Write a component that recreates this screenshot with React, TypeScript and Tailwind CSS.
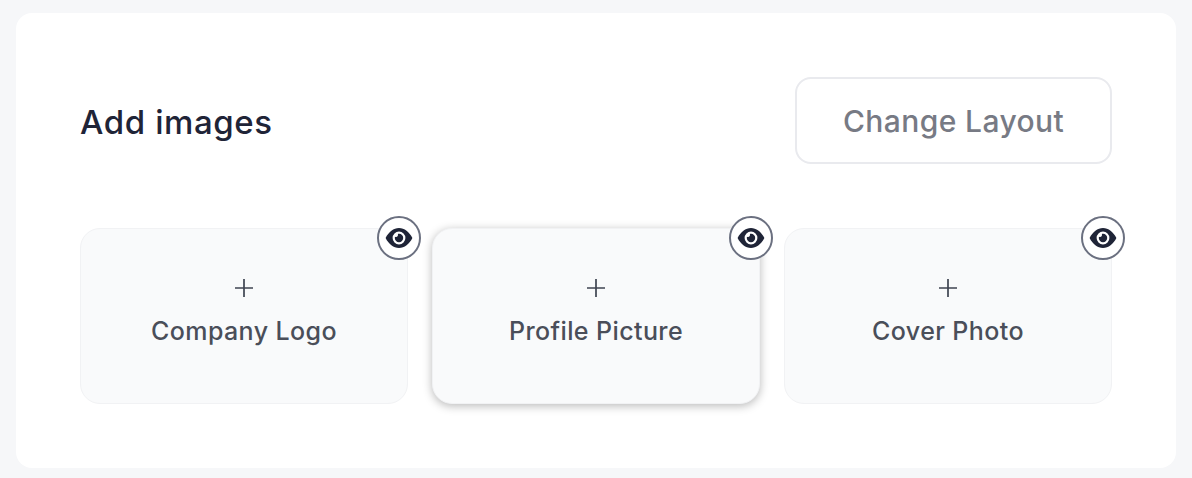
const slots = [
  { label: 'Company Logo', raised: false },
  { label: 'Profile Picture', raised: true },
  { label: 'Cover Photo', raised: false },
];

const EyeBadge = () => (
  <div className="absolute top-[-13px] right-[-14px] w-[44px] h-[44px] rounded-full bg-white border-2 border-[#6b7080] flex items-center justify-center">
    <svg width="28" height="28" viewBox="0 0 28 28">
      <path
        fillRule="evenodd"
        fill="#1f2437"
        d="M14 4C8.600 4 3.600 8 .6 14c3 6 8 10 13.400 10s10.400-4 13.400-10C24.400 8 19.400 4 14 4zM14 7.600a6.400 6.400 0 1 1 0 12.800a6.400 6.400 0 0 1 0-12.800z"
      />
      <path fill="#1f2437" d="M14 9.800a4.200 4.200 0 1 1-4.200 4.200c0-.4.100-.9.200-1.300a2.200 2.200 0 0 0 3-1.500c.1-.5 0-1-.2-1.300c.4-.1.800-.1 1.200-.1z" />
    </svg>
  </div>
);

const ImageSlot = ({ label, raised }: { label: string; raised: boolean }) => (
  <div
    className={`relative h-[176px] rounded-[20px] bg-[#f9fafb] border border-[#f1f2f4] flex flex-col items-center pt-[49px] ${
      raised ? 'shadow-[0_2px_10px_rgba(0,0,0,0.28)]' : ''
    }`}
  >
    <EyeBadge />
    <svg width="20" height="20" viewBox="0 0 20 20" fill="none" stroke="#3f4451" strokeWidth="1.700">
      <path d="M10 1v18M1 10h18" />
    </svg>
    <span className="mt-[17px] text-[25px] leading-[32px] font-medium tracking-[0.4px] text-[#4a4e59]">{label}</span>
  </div>
);

export default function App() {
  return (
    <div className="w-[1192px] h-[478px] bg-[#f6f7f9] pt-[13px] px-[16px] font-['Inter',sans-serif]">
      <div className="h-[455px] bg-white rounded-[16px] px-[64px] pt-[64px]">
        <div className="flex items-center justify-between">
          <h2 className="mt-[2px] text-[33px] leading-[44px] font-medium tracking-[0.6px] text-[#1f2437]">Add images</h2>
          <button className="w-[317px] h-[87px] pt-[2px] rounded-[16px] bg-white border-2 border-[#e9eaee] text-[30px] font-medium tracking-[0.4px] text-[#777a84]">
            Change Layout
          </button>
        </div>
        <div className="mt-[64px] grid grid-cols-3 gap-[24px]">
          {slots.map((slot) => (
            <ImageSlot key={slot.label} label={slot.label} raised={slot.raised} />
          ))}
        </div>
      </div>
    </div>
  );
}
